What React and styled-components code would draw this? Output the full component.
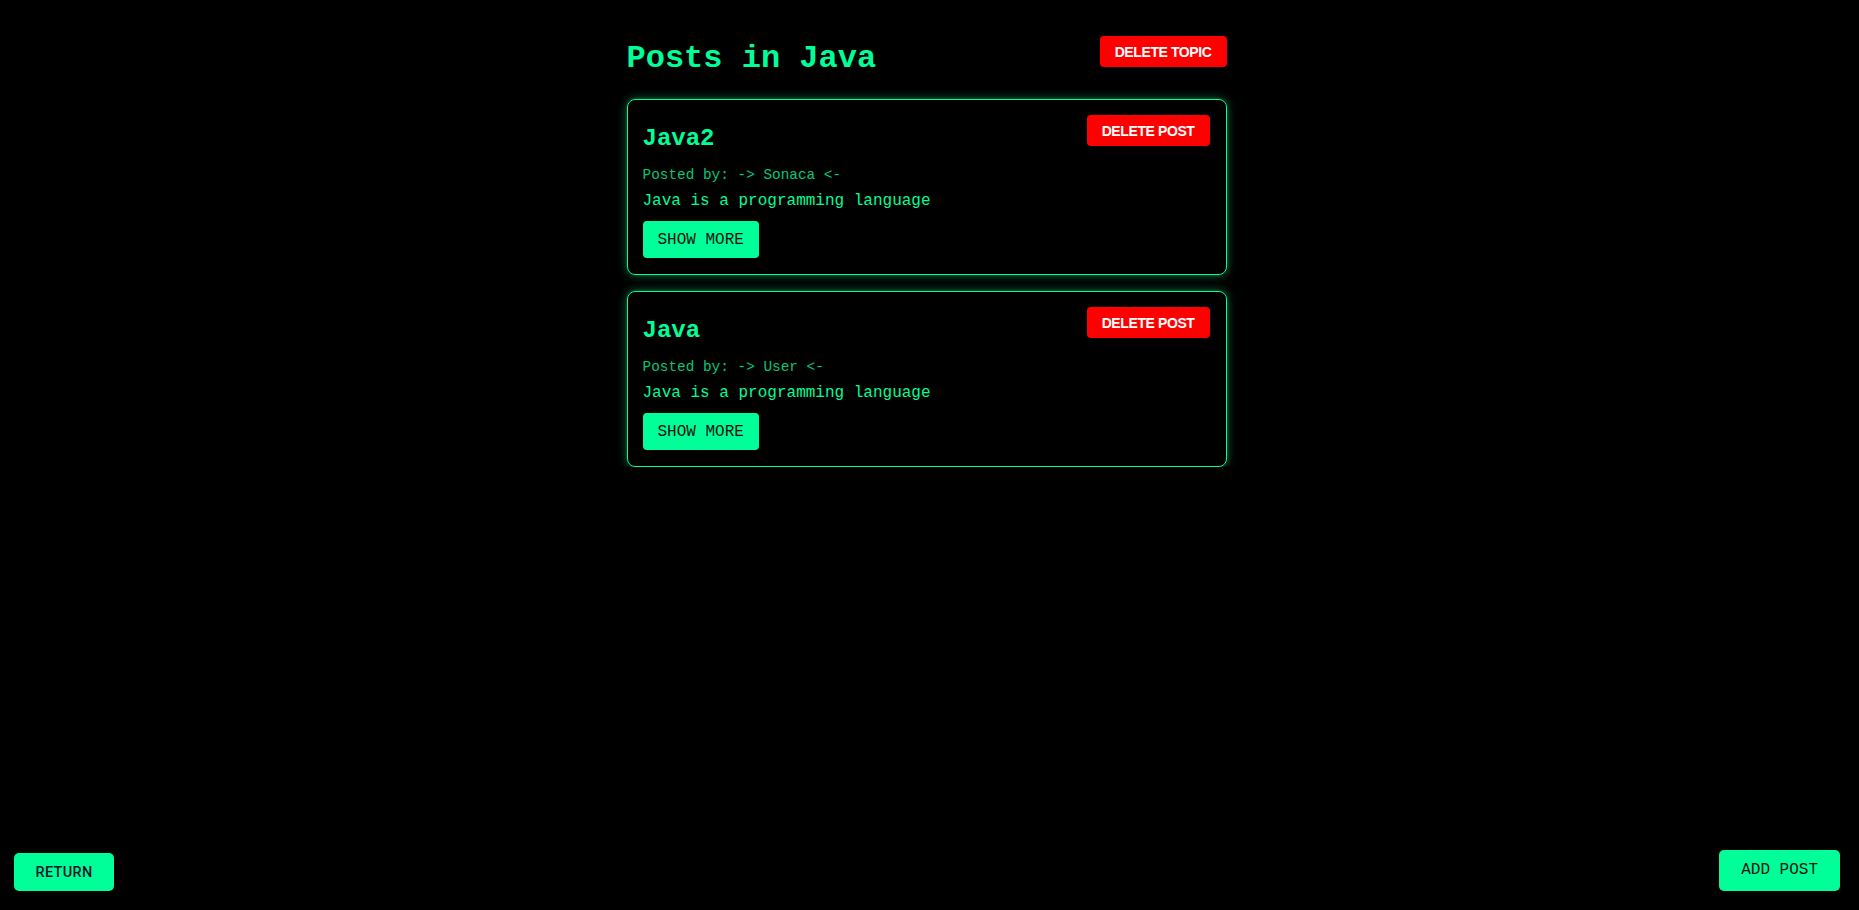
import styled, { createGlobalStyle } from "styled-components";

const posts = [
  { id: 2, title: "Java2", author: "Sonaca", body: "Java is a programming language" },
  { id: 1, title: "Java", author: "User", body: "Java is a programming language" },
];

function App() {
  return (
    <>
      <GlobalStyle />
      <Container>
        <Header>
          <Title>Posts in Java</Title>
          <DangerButton>DELETE TOPIC</DangerButton>
        </Header>
        <PostList>
          {posts.map((post) => (
            <PostCard key={post.id}>
              <CardTop>
                <PostTitle>{post.title}</PostTitle>
                <DangerButton>DELETE POST</DangerButton>
              </CardTop>
              <Author>Posted by: -&gt; {post.author} &lt;-</Author>
              <Body>{post.body}</Body>
              <GreenButton>SHOW MORE</GreenButton>
            </PostCard>
          ))}
        </PostList>
      </Container>
      <ReturnButton>RETURN</ReturnButton>
      <AddButton>ADD POST</AddButton>
    </>
  );
}

export default App;

const GlobalStyle = createGlobalStyle`
  html, body {
    margin: 0;
    background: #000;
    color: #00ff99;
    font-family: "Liberation Mono", "Courier New", monospace;
  }
`;

const Container = styled.div`
  width: 600px;
  margin-left: calc(50% - 303px);
  padding-top: 36px;
`;

const Header = styled.div`
  display: flex;
  justify-content: space-between;
  align-items: flex-start;
  margin-bottom: 22px;
`;

const Title = styled.h1`
  margin: 4px 0 0;
  font-size: 32px;
  font-weight: bold;
  color: #00ff99;
`;

const DangerButton = styled.button`
  height: 31px;
  padding: 0 15px;
  border: none;
  border-radius: 4px;
  background: #ff0000;
  color: #fff;
  font-family: "Liberation Sans", Arial, sans-serif;
  font-weight: bold;
  font-size: 14px;
  letter-spacing: -0.4px;
  cursor: pointer;
`;

const PostList = styled.div`
  display: flex;
  flex-direction: column;
  gap: 16px;
`;

const PostCard = styled.div`
  height: 176px;
  box-sizing: border-box;
  padding: 15px 16px 16px 15px;
  border: 1px solid #00ff99;
  border-radius: 8px;
  box-shadow: 0 0 10px rgba(0, 255, 153, 0.45);
  display: flex;
  flex-direction: column;
  align-items: flex-start;
`;

const CardTop = styled.div`
  align-self: stretch;
  display: flex;
  justify-content: space-between;
  align-items: flex-start;
`;

const PostTitle = styled.h2`
  margin: 10px 0 0;
  font-size: 24px;
  line-height: 27px;
  font-weight: bold;
  color: #00ff99;
`;

const Author = styled.p`
  margin: 15px 0 0;
  font-size: 14.4px;
  line-height: 17px;
  color: #00c97a;
`;

const Body = styled.p`
  margin: 8px 0 0;
  font-size: 16px;
  line-height: 18px;
  color: #00ff99;
`;

const GreenButton = styled.button`
  margin-top: 11px;
  padding: 10px 15px 9px;
  border: none;
  border-radius: 4px;
  background: #00ff99;
  color: #111;
  font-family: "Liberation Mono", "Courier New", monospace;
  font-size: 16px;
  line-height: 18px;
  cursor: pointer;
`;

const ReturnButton = styled.button`
  position: fixed;
  left: 14px;
  bottom: 19px;
  width: 100px;
  height: 38px;
  border: none;
  border-radius: 5px;
  background: #00ff99;
  color: #0b1628;
  font-family: Roboto, "Liberation Sans", sans-serif;
  font-weight: 500;
  font-size: 14.5px;
  letter-spacing: 0.3px;
  cursor: pointer;
`;

const AddButton = styled(GreenButton)`
  position: fixed;
  right: 19px;
  bottom: 19px;
  margin: 0;
  padding: 11px 22px 12px;
  border-radius: 5px;
`;
